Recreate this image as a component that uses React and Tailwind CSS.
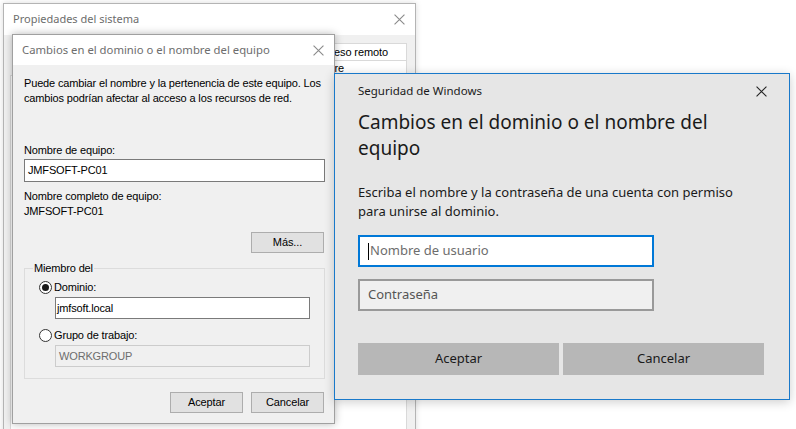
import React from "react";

const CloseX = ({ color = "#666", size = 10 }) => (
  <svg width={size} height={size} viewBox="0 0 10 10" className="block">
    <path d="M0.5 0.5 L9.5 9.5 M9.5 0.5 L0.5 9.5" stroke={color} strokeWidth="1" fill="none" />
  </svg>
);

const Radio = ({ checked }) => (
  <span className="w-[13px] h-[13px] rounded-full border border-[#333] bg-white flex items-center justify-center shrink-0">
    {checked && <span className="w-[7px] h-[7px] rounded-full bg-[#1a1a1a]" />}
  </span>
);

const ClassicButton = ({ children }) => (
  <button className="w-[73px] h-[21px] bg-[#e1e1e1] border border-[#adadad] text-[11px] tracking-[-0.1px] text-black leading-none">
    {children}
  </button>
);

const App = () => {
  return (
    <div className="relative w-[796px] h-[429px] bg-white overflow-hidden">
      {/* Ventana de fondo: Propiedades del sistema */}
      <div className="absolute left-[3px] top-[3px] w-[413px] h-[460px] border border-[#b4b4b4] bg-[#f0f0f0] shadow-[0_0_6px_rgba(0,0,0,0.15)] flex flex-col">
        <div className="h-[31px] bg-white flex items-center justify-between pl-[9px] pr-[10px] shrink-0 font-['Noto_Sans',sans-serif] text-[11px] text-[#6d6d6d]">
          <span>Propiedades del sistema</span>
          <CloseX color="#8a8a8a" size={11} />
        </div>
        <div className="flex-1 pt-[8px] pl-[6px] pr-[8px] font-['Liberation_Sans',Arial,sans-serif] text-[11px] tracking-[-0.1px] text-black">
          <div className="flex justify-end">
            <div className="w-[120px] h-[17px] bg-white border border-[#d9d9d9] border-b-0 pr-[18px] flex items-center justify-end leading-none">
              Acceso remoto
            </div>
          </div>
          <div className="flex justify-end">
            <div className="w-[120px] h-[15px] bg-white border border-[#d9d9d9] border-b-0 pr-[62px] flex items-center justify-end leading-none">
              Hardware
            </div>
          </div>
          <div className="h-[380px] bg-white border border-[#d9d9d9]" />
        </div>
      </div>

      {/* Diálogo: Cambios en el dominio o el nombre del equipo */}
      <div className="absolute left-[12px] top-[34px] w-[323px] h-[390px] border border-[#a0a0a0] bg-[#f0f0f0] shadow-[0_0_8px_rgba(0,0,0,0.28)] flex flex-col">
        <div className="h-[30px] bg-white flex items-center justify-between pl-[9px] pr-[10px] shrink-0 font-['Noto_Sans',sans-serif] text-[11.3px] text-[#6d6d6d]">
          <span>Cambios en el dominio o el nombre del equipo</span>
          <CloseX color="#8a8a8a" size={11} />
        </div>
        <div className="flex flex-col pl-[11px] pr-[9px] pt-[11px] font-['Liberation_Sans',Arial,sans-serif] text-[11px] tracking-[-0.15px] leading-[15px] text-black">
          <p>
            Puede cambiar el nombre y la pertenencia de este equipo. Los cambios podrían afectar al acceso a los recursos de red.
          </p>
          <span className="mt-[37px]">Nombre de equipo:</span>
          <div className="mt-[1px] h-[23px] bg-white border border-[#7a7a7a] flex items-center px-[3px]">JMFSOFT-PC01</div>
          <span className="mt-[7px]">Nombre completo de equipo:</span>
          <span>JMFSOFT-PC01</span>
          <div className="mt-[13px] flex justify-end pr-[1px]">
            <ClassicButton>Más...</ClassicButton>
          </div>
          <div className="mt-[15px] relative h-[111px] border border-[#dcdcdc] pl-[14px] pr-[14px] pt-[11px]">
            <span className="absolute left-[8px] top-[-8px] bg-[#f0f0f0] px-[1px]">Miembro del</span>
            <div className="flex items-center gap-[2px]">
              <Radio checked />
              <span>Dominio:</span>
            </div>
            <div className="ml-[16px] mt-[2px] h-[22px] bg-white border border-[#7a7a7a] flex items-center px-[1px]">jmfsoft.local</div>
            <div className="mt-[9px] flex items-center gap-[2px]">
              <Radio />
              <span>Grupo de trabajo:</span>
            </div>
            <div className="ml-[16px] mt-[2px] h-[22px] bg-[#f0f0f0] border border-[#cccccc] flex items-center px-[3px] text-[#6d6d6d]">WORKGROUP</div>
          </div>
          <div className="mt-[13px] flex justify-end gap-[8px] pr-[1px]">
            <ClassicButton>Aceptar</ClassicButton>
            <ClassicButton>Cancelar</ClassicButton>
          </div>
        </div>
      </div>

      {/* Diálogo: Seguridad de Windows */}
      <div className="absolute left-[334px] top-[73px] w-[456px] h-[327px] border border-[#1979ca] bg-[#e6e6e6] shadow-[0_2px_10px_rgba(0,0,0,0.2)] flex flex-col pl-[23px] pr-[23px] font-['Noto_Sans',sans-serif] text-[#1a1a1a]">
        <div className="h-[33px] flex items-center justify-between pt-[1px] shrink-0">
          <span className="text-[11.5px]">Seguridad de Windows</span>
          <span className="mr-[-1px]">
            <CloseX color="#222" size={11} />
          </span>
        </div>
        <h1 className="mt-[2px] text-[19px] leading-[26px] font-normal">
          Cambios en el dominio o el nombre del equipo
        </h1>
        <p className="mt-[22px] max-w-[385px] text-[13px] leading-[19px]">
          Escriba el nombre y la contraseña de una cuenta con permiso para unirse al dominio.
        </p>
        <div className="mt-[14px] w-[296px] h-[32px] bg-white border-2 border-[#0078d7] flex items-center pl-[8px] text-[13px] text-[#6d6d6d]">
          <span className="w-[1px] h-[17px] bg-black mr-[1px]" />
          Nombre de usuario
        </div>
        <div className="mt-[12px] w-[296px] h-[32px] bg-[#f0f0f0] border-2 border-[#999999] flex items-center pl-[8px] text-[13px] text-[#555]">
          Contraseña
        </div>
        <div className="mt-[32px] flex gap-[4px]">
          <button className="w-[201px] h-[32px] bg-[#b7b7b7] text-[13px] text-[#1a1a1a]">Aceptar</button>
          <button className="w-[201px] h-[32px] bg-[#b7b7b7] text-[13px] text-[#1a1a1a]">Cancelar</button>
        </div>
      </div>
    </div>
  );
};

export default App;
